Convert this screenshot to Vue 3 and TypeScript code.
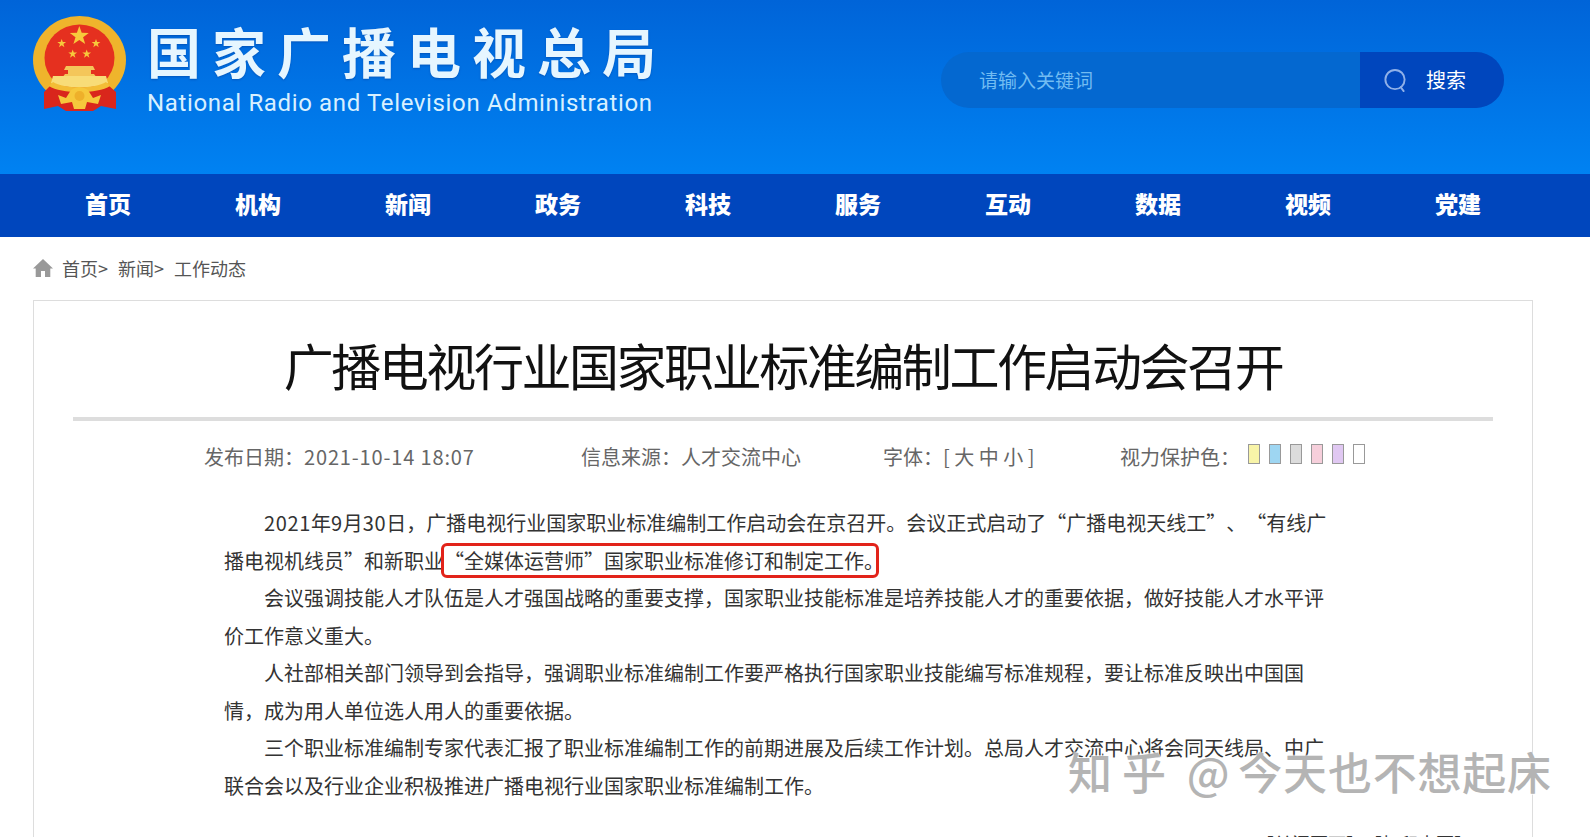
<script setup lang="ts">
const navItems = ['首页', '机构', '新闻', '政务', '科技', '服务', '互动', '数据', '视频', '党建']
const crumbs = ['首页>', '新闻>', '工作动态']
const swatches = ['#f8f4a8', '#9ed6f2', '#dcdcdc', '#f6cfdb', '#e0c8f2', '#ffffff']

// 国徽上的五角星
function star(cx: number, cy: number, r: number): string {
  const pts: string[] = []
  for (let i = 0; i < 10; i++) {
    const radius = i % 2 === 0 ? r : r * 0.4
    const a = (Math.PI / 5) * i - Math.PI / 2
    pts.push(`${(cx + radius * Math.cos(a)).toFixed(1)},${(cy + radius * Math.sin(a)).toFixed(1)}`)
  }
  return pts.join(' ')
}
const stars = [
  star(46.3, 20, 10),
  star(28.7, 27.5, 4.6),
  star(63, 27.5, 4.6),
  star(39.7, 38, 4.6),
  star(53.7, 38, 4.6),
]
</script>

<template>
  <div class="page">
    <header class="masthead">
      <div class="brand">
        <svg class="emblem" viewBox="0 0 94 98" aria-hidden="true">
          <ellipse cx="46.5" cy="44" rx="46.5" ry="44" fill="#efb42c" />
          <ellipse cx="46.5" cy="42" rx="35" ry="33.5" fill="#e5301f" />
          <polygon v-for="(p, i) in stars" :key="i" :points="p" fill="#f7c93c" />
          <path d="M33 50 H60 L62 54 H58 V58 H61 L64 62 H29 L32 58 H35 V54 H31 Z" fill="#f4c65a" />
          <path d="M20 60 H73 L75 67 C64 73 30 73 18 67 Z" fill="#f8dc78" />
          <path d="M18 69 C30 76 63 76 75 69 L83 76 L83 93 L68 90 L60 95 H33 L25 90 L11 93 L11 76 Z" fill="#d9261c" />
          <path d="M16 70 C28 78 65 78 77 70 L73 66 C62 73 31 73 20 66 Z" fill="#f3bd36" />
          <path d="M38 74 Q46 68 55 74 L60 82 L68 79 L65 88 L54 86 L52 93 H41 L39 86 L28 88 L25 79 L33 82 Z" fill="#f6c83c" />
          <circle cx="46.5" cy="80" r="5" fill="#eeb02a" />
        </svg>
        <div class="brand-text">
          <div class="brand-cn">国家广播电视总局</div>
          <div class="brand-en">National Radio and Television Administration</div>
        </div>
      </div>
      <form class="search" @submit.prevent>
        <input class="search-input" type="text" placeholder="请输入关键词" />
        <button class="search-btn" type="submit">
          <svg class="search-icon" viewBox="0 0 26 26" aria-hidden="true">
            <ellipse cx="12.5" cy="12" rx="10" ry="10" fill="none" stroke="#8fb0e8" stroke-width="2" />
            <path d="M18.5 20 L21.5 24" fill="none" stroke="#8fb0e8" stroke-width="2" stroke-linecap="round" />
          </svg>
          <span>搜索</span>
        </button>
      </form>
    </header>

    <nav class="nav">
      <a v-for="item in navItems" :key="item" class="nav-item">{{ item }}</a>
    </nav>

    <div class="crumbs">
      <svg class="home" viewBox="0 0 20 20" aria-hidden="true">
        <path d="M10 1 L20 10.5 H17.3 V19 H12 V13 H8 V19 H2.7 V10.5 H0 Z" fill="#999" />
      </svg>
      <span v-for="c in crumbs" :key="c">{{ c }}</span>
    </div>

    <main class="card">
      <h1 class="title">广播电视行业国家职业标准编制工作启动会召开</h1>
      <div class="meta">
        <span class="meta-date">发布日期：<span class="num-wide">2021-10-14 18:07</span></span>
        <span class="meta-source">信息来源：人才交流中心</span>
        <span class="meta-font">字体：[ 大 中 小 ]</span>
        <span class="meta-eye">视力保护色：</span>
        <span class="swatches">
          <i v-for="s in swatches" :key="s" class="swatch" :style="{ background: s }"></i>
        </span>
      </div>
      <article class="article">
        <p><span class="num">2021</span>年<span class="num">9</span>月<span class="num">30</span>日，广播电视行业国家职业标准编制工作启动会在京召开。会议正式启动了“广播电视天线工”、“有线广播电视机线员”和新职业<span class="mark">“全媒体运营师”国家职业标准修订和制定工作<span class="mark-end">。</span></span></p>
        <p>会议强调技能人才队伍是人才强国战略的重要支撑，国家职业技能标准是培养技能人才的重要依据，做好技能人才水平评价工作意义重大。</p>
        <p>人社部相关部门领导到会指导，强调职业标准编制工作要严格执行国家职业技能编写标准规程，要让标准反映出中国国情，成为用人单位选人用人的重要依据。</p>
        <p>三个职业标准编制专家代表汇报了职业标准编制工作的前期进展及后续工作计划。总局人才交流中心将会同天线局、中广联合会以及行业企业积极推进广播电视行业国家职业标准编制工作。</p>
      </article>
      <div class="actions">【关闭页面】【打印本页】</div>
    </main>

    <div class="watermark"><span class="wm-logo">知乎</span> <span class="wm-at">@</span>今天也不想起床</div>
  </div>
</template>

<style>
html, body {
  margin: 0;
  height: 100%;
  overflow: hidden;
  background: #fff;
}
</style>

<style scoped>
.page {
  position: relative;
  height: 837px;
  overflow: hidden;
  font-family: "Noto Sans CJK SC", "Liberation Sans", sans-serif;
  color: #333;
  text-spacing-trim: space-all;
}

.masthead {
  height: 174px;
  box-sizing: border-box;
  padding: 16px 86px 0 33px;
  display: flex;
  justify-content: space-between;
  align-items: flex-start;
  background: linear-gradient(180deg, #0064d8 0%, #0082f2 100%);
}
.brand {
  display: flex;
  gap: 20px;
}
.emblem {
  width: 94px;
  height: 98px;
  flex: none;
}
.brand-cn {
  margin-top: -1px;
  font-size: 54px;
  line-height: 72px;
  font-weight: 700;
  letter-spacing: 11px;
  color: #e6f6ff;
  white-space: nowrap;
  text-shadow: 0 1px 2px rgba(0, 40, 120, .35);
}
.brand-en {
  margin-top: 2px;
  font-family: Roboto, "Liberation Sans", sans-serif;
  font-size: 24px;
  line-height: 28px;
  letter-spacing: .64px;
  color: #d8f0ff;
  white-space: nowrap;
}

.search {
  margin-top: 36px;
  width: 563px;
  height: 56px;
  display: flex;
  border-radius: 28px;
  overflow: hidden;
  background: #0468d0;
}
.search-input {
  flex: 1;
  min-width: 0;
  box-sizing: border-box;
  padding: 0 0 2px 38px;
  border: 0;
  outline: 0;
  background: transparent;
  color: #fff;
  font-family: inherit;
  font-size: 19px;
}
.search-input::placeholder {
  color: #72bcf2;
  opacity: 1;
}
.search-btn {
  width: 144px;
  flex: none;
  display: flex;
  align-items: center;
  gap: 18px;
  padding: 0 0 2px 23px;
  border: 0;
  background: #0046bd;
  color: #fff;
  font-family: inherit;
  font-size: 20px;
}
.search-icon {
  width: 25px;
  height: 25px;
  margin-top: 2px;
}

.nav {
  height: 63px;
  box-sizing: border-box;
  padding: 0 0 5px 33px;
  display: flex;
  align-items: center;
  background: #0046bd;
}
.nav-item {
  width: 150px;
  text-align: center;
  color: #fff;
  font-size: 23px;
  font-weight: 900;
}

.crumbs {
  height: 63px;
  box-sizing: border-box;
  padding: 0 0 2px 33px;
  display: flex;
  align-items: center;
  gap: 10px;
  font-size: 18px;
  color: #555;
}
.home {
  width: 20px;
  height: 20px;
  margin-right: -1px;
}

.card {
  margin: 0 57px 0 33px;
  padding: 0 39px;
  height: 600px;
  border: 1px solid #ddd;
  border-bottom: 0;
}
.title {
  margin: 0;
  height: 116px;
  border-bottom: 4px solid #ddd;
  text-align: center;
  font-size: 50px;
  line-height: 126px;
  font-weight: 400;
  letter-spacing: -2.45px;
  color: #111;
  white-space: nowrap;
}
.meta {
  display: flex;
  align-items: center;
  height: 71px;
  padding-left: 131px;
  font-size: 20px;
  color: #666;
  white-space: nowrap;
}
.meta-date { width: 377px; }
.meta-source { width: 302px; }
.meta-font { width: 237px; }
.meta-eye { width: 128px; }
.num { letter-spacing: .65px; }
.num-wide { letter-spacing: .85px; }
.swatches {
  display: flex;
  gap: 9px;
  margin-top: -6px;
}
.swatch {
  display: block;
  width: 10px;
  height: 18px;
  border: 1px solid #999;
}

.article {
  margin: 12px 0 0 151px;
  width: 1104px;
  font-size: 20px;
  line-height: 37.5px;
  color: #333;
}
.article p {
  margin: 0;
  text-indent: 40px;
}
.mark {
  outline: 3.5px solid #e2231a;
  border-radius: 3px;
}
.mark-end {
  margin-right: -8px;
}

.actions {
  margin-top: 21px;
  padding-left: 1183px;
  font-size: 18px;
  line-height: 37px;
  white-space: nowrap;
  color: #333;
}

.watermark {
  position: absolute;
  left: 1068px;
  top: 741px;
  font-size: 44px;
  line-height: 60px;
  font-weight: 500;
  white-space: nowrap;
  color: #b4b4b4;
  letter-spacing: .8px;
  text-shadow: 1px 1px 0 rgba(255, 255, 255, .8), -1px -1px 0 rgba(255, 255, 255, .6);
}
.wm-logo {
  letter-spacing: 10px;
}
.wm-at {
  margin-right: 8px;
}
</style>
